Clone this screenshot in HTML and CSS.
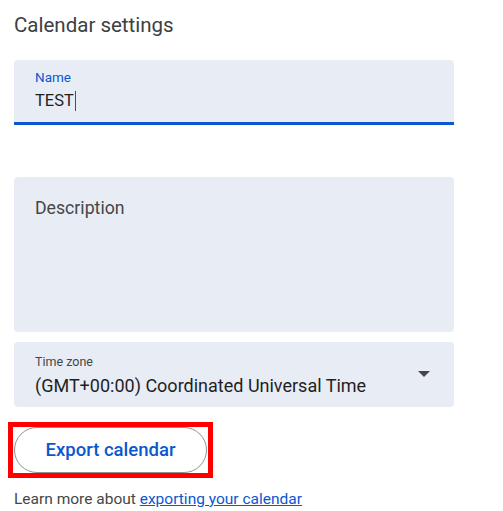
FILE: index.html
```html
<!DOCTYPE html>
<html lang="en">
<head>
<meta charset="utf-8">
<title>Calendar settings</title>
<link rel="stylesheet" href="styles.css">
</head>
<body>
<div class="page">
  <h1 class="title">Calendar settings</h1>

  <div class="field name-field">
    <label class="field-label focused">Name</label>
    <div class="field-value name-value">TEST<span class="caret"></span></div>
  </div>

  <div class="field desc-field">
    <span class="placeholder">Description</span>
  </div>

  <div class="field select-field">
    <div class="select-text">
      <label class="field-label">Time zone</label>
      <div class="field-value tz-value">(GMT+00:00) Coordinated Universal Time</div>
    </div>
    <svg class="arrow" width="12" height="6" viewBox="0 0 12 6" aria-hidden="true">
      <path d="M0 0h12L6 6z" fill="#444746"/>
    </svg>
  </div>

  <div class="highlight">
    <button class="export-btn" type="button">Export calendar</button>
  </div>

  <p class="learn">Learn more about <a href="#">exporting your calendar</a></p>
</div>
</body>
</html>
```

FILE: styles.css
```css
* { box-sizing: border-box; }
html, body { margin: 0; background: #fff; }
body { font-family: Roboto, "Noto Sans", Arial, sans-serif; color: #1f1f1f; }

.page {
  display: flex;
  flex-direction: column;
  align-items: flex-start;
  padding: 11px 0 0 14px;
  width: 454px;
}

.title {
  margin: 0 0 21px;
  font-size: 20.5px;
  line-height: 28px;
  font-weight: 400;
  color: #3c4043;
}

.field {
  width: 440px;
  background: #e8ecf5;
  border-radius: 4px;
}

.name-field {
  height: 65px;
  padding: 9px 20px 0 21px;
  border-radius: 4px 4px 0 0;
  border-bottom: 3px solid #0b57d0;
  display: flex;
  flex-direction: column;
  gap: 4px;
}

.field-label {
  font-size: 12.5px;
  line-height: 16px;
  color: #444746;
}
.field-label.focused { color: #0b57d0; font-size: 13.5px; }

.field-value {
  font-size: 17.5px;
  line-height: 24px;
  color: #1f1f1f;
  display: flex;
  align-items: center;
}
.name-value { font-size: 16.5px; }
.tz-value { font-size: 18px; }

.caret {
  display: inline-block;
  width: 1.5px;
  height: 20px;
  background: #0b57d0;
  margin-left: 1px;
}

.desc-field {
  margin-top: 52px;
  height: 155px;
  padding: 19px 21px 0;
}

.placeholder {
  font-size: 17.7px;
  line-height: 24px;
  color: #444746;
}

.select-field {
  margin-top: 10px;
  height: 65px;
  padding: 12px 24px 0 21px;
  display: flex;
  justify-content: space-between;
  align-items: flex-start;
}

.select-text {
  display: flex;
  flex-direction: column;
  gap: 4px;
}

.arrow { margin-top: 17px; flex: none; }

.highlight {
  margin-top: 15px;
  margin-left: -6px;
  border: 5px solid #ff0000;
  padding: 0 1px;
  display: flex;
}

.export-btn {
  width: 193px;
  height: 46px;
  border: 1px solid #8e918f;
  border-radius: 23px;
  background: #fff;
  font-family: Roboto, "Noto Sans", Arial, sans-serif;
  font-size: 18.5px;
  font-weight: 500;
  color: #0b57d0;
  padding: 0;
  cursor: pointer;
}

.learn {
  margin: 11px 0 0;
  font-size: 15.5px;
  line-height: 20px;
  color: #444746;
}
.learn a { color: #0b57d0; text-decoration: underline; }
```
